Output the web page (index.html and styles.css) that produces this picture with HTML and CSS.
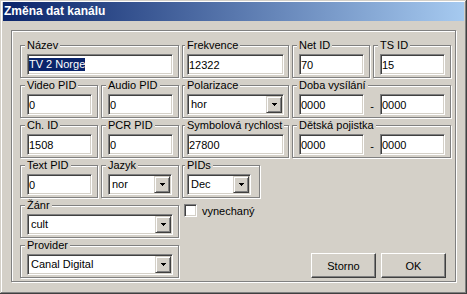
FILE: index.html
```html
<!DOCTYPE html>
<html lang="cs">
<head>
    <meta charset="UTF-8">
    <meta name="viewport" content="width=device-width, initial-scale=1.0">
    <title>Změna dat kanálu</title>
    <link rel="stylesheet" href="styles.css">
</head>
<body>
    <div class="window">
        <div class="title">Změna dat kanálu</div>
        <div class="panel">
            <div class="grid">
                <!-- row 1 -->
                <div class="group span2">
                    <div class="legend">Název</div>
                    <div class="edit"><span class="sel">TV 2 Norge</span></div>
                </div>
                <div class="group wide">
                    <div class="legend">Frekvence</div>
                    <div class="edit">12322</div>
                </div>
                <div class="group">
                    <div class="legend">Net ID</div>
                    <div class="edit">70</div>
                </div>
                <div class="group">
                    <div class="legend">TS ID</div>
                    <div class="edit">15</div>
                </div>

                <!-- row 2 -->
                <div class="group">
                    <div class="legend">Video PID</div>
                    <div class="edit">0</div>
                </div>
                <div class="group">
                    <div class="legend">Audio PID</div>
                    <div class="edit">0</div>
                </div>
                <div class="group wide">
                    <div class="legend">Polarizace</div>
                    <div class="combo">
                        <span class="combo-text">hor</span>
                        <span class="combo-btn"><svg width="5" height="3" viewBox="0 0 5 3" shape-rendering="crispEdges"><path d="M0 0h5v1h-1v1h-1v1h-1v-1h-1v-1h-1z"/></svg></span>
                    </div>
                </div>
                <div class="group span2">
                    <div class="legend">Doba vysílání</div>
                    <div class="range">
                        <div class="edit">0000</div>
                        <span class="dash">-</span>
                        <div class="edit">0000</div>
                    </div>
                </div>

                <!-- row 3 -->
                <div class="group">
                    <div class="legend">Ch. ID</div>
                    <div class="edit">1508</div>
                </div>
                <div class="group">
                    <div class="legend">PCR PID</div>
                    <div class="edit">0</div>
                </div>
                <div class="group wide">
                    <div class="legend">Symbolová rychlost</div>
                    <div class="edit">27800</div>
                </div>
                <div class="group span2">
                    <div class="legend">Dětská pojistka</div>
                    <div class="range">
                        <div class="edit">0000</div>
                        <span class="dash">-</span>
                        <div class="edit">0000</div>
                    </div>
                </div>

                <!-- row 4 -->
                <div class="group">
                    <div class="legend">Text PID</div>
                    <div class="edit">0</div>
                </div>
                <div class="group">
                    <div class="legend">Jazyk</div>
                    <div class="combo narrow">
                        <span class="combo-text">nor</span>
                        <span class="combo-btn"><svg width="5" height="3" viewBox="0 0 5 3" shape-rendering="crispEdges"><path d="M0 0h5v1h-1v1h-1v1h-1v-1h-1v-1h-1z"/></svg></span>
                    </div>
                </div>
                <div class="group wide pids">
                    <div class="legend">PIDs</div>
                    <div class="combo narrow">
                        <span class="combo-text">Dec</span>
                        <span class="combo-btn"><svg width="5" height="3" viewBox="0 0 5 3" shape-rendering="crispEdges"><path d="M0 0h5v1h-1v1h-1v1h-1v-1h-1v-1h-1z"/></svg></span>
                    </div>
                </div>

                <!-- row 5 -->
                <div class="group span2 zanr">
                    <div class="legend">Žánr</div>
                    <div class="combo">
                        <span class="combo-text">cult</span>
                        <span class="combo-btn"><svg width="5" height="3" viewBox="0 0 5 3" shape-rendering="crispEdges"><path d="M0 0h5v1h-1v1h-1v1h-1v-1h-1v-1h-1z"/></svg></span>
                    </div>
                </div>
                <label class="check">
                    <span class="box"></span>
                    vynechaný
                </label>

                <!-- row 6 -->
                <div class="group span2 provider">
                    <div class="legend">Provider</div>
                    <div class="combo">
                        <span class="combo-text">Canal Digital</span>
                        <span class="combo-btn"><svg width="5" height="3" viewBox="0 0 5 3" shape-rendering="crispEdges"><path d="M0 0h5v1h-1v1h-1v1h-1v-1h-1v-1h-1z"/></svg></span>
                    </div>
                </div>
                <div class="buttons">
                    <div class="btn">Storno</div>
                    <div class="btn">OK</div>
                </div>
            </div>
        </div>
    </div>
</body>
</html>
```

FILE: styles.css
```css
body {
    margin: 0;
    padding: 0;
    font-family: "Liberation Sans", Arial, sans-serif;
    font-size: 11px;
    color: #000;
    background-color: #d4d0c8;
}

.window {
    width: 467px;
    height: 294px;
    box-sizing: border-box;
    padding: 2px 3px;
    background-color: #d4d0c8;
    box-shadow: inset -1px -1px #404040, inset 1px 1px #d4d0c8,
                inset -2px -2px #808080, inset 2px 2px #fff;
}

.title {
    height: 19px;
    line-height: 19px;
    padding-left: 1px;
    font-size: 12px;
    font-weight: bold;
    color: #fff;
    background: linear-gradient(to right, #0a246a, #a6caf0);
}

.panel {
    margin: 9px 8px 0 8px;
    padding: 8px 0 3px 8px;
    border: 1px solid #808080;
    box-shadow: inset 1px 1px #fff, 1px 1px #fff;
}

.grid {
    display: grid;
    grid-template-columns: 78px 78px 107px 78px 78px;
    grid-template-rows: repeat(6, 39px);
    gap: 1px 3px;
}

/* group boxes */
.group {
    margin-top: 6px;
    padding: 0 5px 2px 6px;
    border: 1px solid #808080;
    box-shadow: inset 1px 1px #fff, 1px 1px #fff;
    min-width: 0;
}

.group.wide {
    padding: 0 4px 2px 4px;
}

.span2 {
    grid-column: span 2;
}

.legend {
    width: fit-content;
    margin: -7px 0 0 -2px;
    padding: 0 2px;
    line-height: 13px;
    background-color: #d4d0c8;
    white-space: nowrap;
}

/* edit fields */
.edit,
.combo {
    height: 21px;
    box-sizing: border-box;
    margin-top: 2px;
    border: 1px solid;
    border-color: #808080 #fff #fff #808080;
    box-shadow: inset 1px 1px #404040, inset -1px -1px #d4d0c8;
    background-color: #fff;
}

.edit {
    display: flex;
    align-items: center;
    padding: 0 1px;
    white-space: nowrap;
}

.sel {
    line-height: 13px;
    background-color: #0a246a;
    color: #fff;
}

.range {
    display: flex;
    align-items: center;
}

.range .edit {
    width: 65px;
    flex: none;
}

.dash {
    flex: 1;
    text-align: center;
    margin-top: 5px;
}

/* combo boxes */
.combo {
    display: flex;
    padding: 1px;
}

.combo.narrow {
    width: 64px;
}

.combo-text {
    flex: 1;
    padding-left: 2px;
    line-height: 17px;
    white-space: nowrap;
}

.combo-btn {
    width: 16px;
    height: 17px;
    box-sizing: border-box;
    display: flex;
    align-items: center;
    justify-content: center;
    border: 1px solid;
    border-color: #d4d0c8 #404040 #404040 #d4d0c8;
    box-shadow: inset 1px 1px #fff, inset -1px -1px #808080;
    background-color: #d4d0c8;
}

.pids {
    width: 78px;
    box-sizing: border-box;
}

.zanr {
    grid-column: 1 / 3;
    grid-row: 5;
}

.provider {
    grid-column: 1 / 3;
    grid-row: 6;
}

/* checkbox */
.check {
    grid-column: 3;
    grid-row: 5;
    align-self: start;
    display: flex;
    align-items: center;
    gap: 5px;
    margin: 5px 0 0 2px;
    height: 13px;
}

.box {
    width: 13px;
    height: 13px;
    box-sizing: border-box;
    border: 1px solid;
    border-color: #808080 #fff #fff #808080;
    box-shadow: inset 1px 1px #404040, inset -1px -1px #d4d0c8;
    background-color: #fff;
}

/* buttons */
.buttons {
    grid-column: 4 / 6;
    grid-row: 6;
    display: flex;
    justify-content: flex-end;
    align-items: flex-end;
    gap: 5px;
    padding-right: 5px;
}

.btn {
    width: 65px;
    height: 25px;
    box-sizing: border-box;
    display: flex;
    align-items: center;
    justify-content: center;
    border: 1px solid;
    border-color: #fff #404040 #404040 #fff;
    box-shadow: inset -1px -1px #808080;
    background-color: #d4d0c8;
}
```
